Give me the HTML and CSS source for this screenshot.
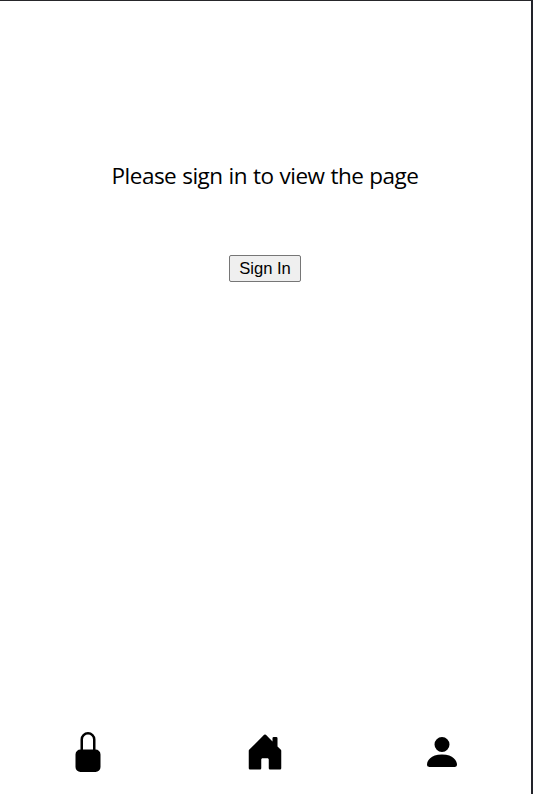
FILE: index.html
```html
<!DOCTYPE html>
<html lang="en">
<head>
<meta charset="utf-8">
<title>Sign in</title>
<link rel="stylesheet" href="styles.css">
</head>
<body>
<div class="app">
  <main class="content">
    <p class="message">Please sign in to view the page</p>
    <button class="sign-in" type="button">Sign In</button>
  </main>
  <nav class="tabs">
    <a class="tab"><svg viewBox="0 0 16 16"><path d="M8 1a2 2 0 0 1 2 2v4H6V3a2 2 0 0 1 2-2m3 6V3a3 3 0 0 0-6 0v4a2 2 0 0 0-2 2v5a2 2 0 0 0 2 2h6a2 2 0 0 0 2-2V9a2 2 0 0 0-2-2"/></svg></a>
    <a class="tab"><svg viewBox="0 0 16 16"><path d="M6.5 14.5v-3.505c0-.245.25-.495.5-.495h2c.25 0 .5.25.5.5v3.5a.5.5 0 0 0 .5.5h4a.5.5 0 0 0 .5-.5v-7a.5.5 0 0 0-.146-.354L13 5.793V2.5a.5.5 0 0 0-.5-.5h-1a.5.5 0 0 0-.5.5v1.293L8.354 1.146a.5.5 0 0 0-.708 0l-6 6A.5.5 0 0 0 1.5 7.5v7a.5.5 0 0 0 .5.5h4a.5.5 0 0 0 .5-.5"/></svg></a>
    <a class="tab"><svg viewBox="0 0 16 16"><path d="M3 14s-1 0-1-1 1-4 6-4 6 3 6 4-1 1-1 1zm5-6a3 3 0 1 0 0-6 3 3 0 0 0 0 6"/></svg></a>
  </nav>
</div>
</body>
</html>
```
FILE: styles.css
```css
* { box-sizing: border-box; }
body { margin: 0; background: #fff; color: #000; }
.app {
  display: flex;
  flex-direction: column;
  height: 794px;
  padding-right: 1px;
  border-top: 1px solid #26262a;
  border-right: 2px solid #22232a;
}
.content {
  flex: 1;
  display: flex;
  flex-direction: column;
  align-items: center;
  padding-top: 159px;
}
.message {
  margin: 0 0 63px;
  font: 400 22.5px/32px "Segoe UI", "Open Sans", sans-serif;
  letter-spacing: -0.5px;
  word-spacing: 0.6px;
  white-space: nowrap;
}
.sign-in {
  width: 72px;
  height: 27px;
  padding: 0;
  border: 1px solid #767676;
  border-radius: 2px;
  background: #efefef;
  color: #000;
  font: 16.6px/25px "Liberation Sans", Arial, sans-serif;
}
.tabs {
  display: grid;
  grid-template-columns: repeat(3, 1fr);
  padding-bottom: 22px;
}
.tab { display: flex; justify-content: center; }
.tab svg { display: block; width: 40px; height: 40px; fill: #000; }
```
